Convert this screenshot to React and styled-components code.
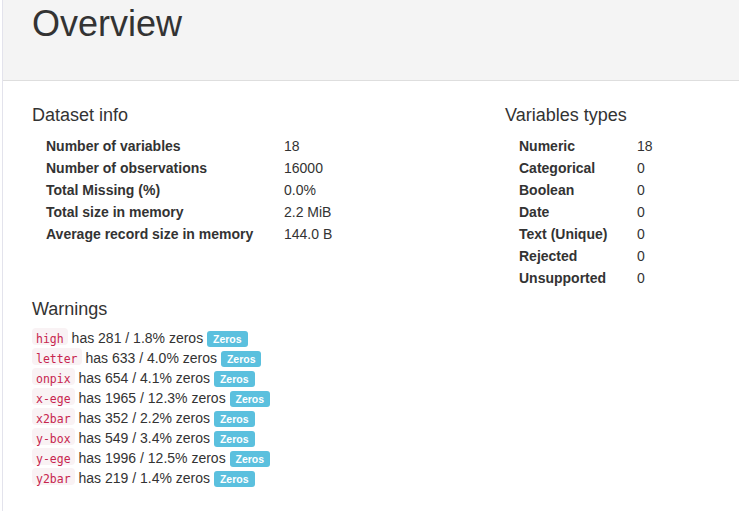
import React from "react";
import styled, { createGlobalStyle } from "styled-components";

const Global = createGlobalStyle`
  html, body { margin: 0; padding: 0; background: #fff; }
  body {
    font-family: "Liberation Sans", Arial, Helvetica, sans-serif;
    color: #333;
  }
`;

const Page = styled.div`
  margin-left: 2px;
  border-left: 1px solid #e3e3ec;
  min-height: 511px;
  box-sizing: border-box;
`;

const Header = styled.header`
  height: 81px;
  box-sizing: border-box;
  background: #f4f4f4;
  border-bottom: 1px solid #dedede;
  padding: 4px 0 0 29px;
`;

const Title = styled.h1`
  margin: 0;
  font-size: 36px;
  font-weight: 400;
  line-height: 1.1;
`;

const Body = styled.main`
  padding: 24px 0 0 29px;
`;

const Columns = styled.div`
  display: grid;
  grid-template-columns: 473px 1fr;
`;

const Heading = styled.h4`
  margin: 0;
  font-size: 18px;
  font-weight: 400;
  line-height: 20px;
`;

const Table = styled.div`
  display: grid;
  grid-template-columns: ${(p) => p.$label}px auto;
  margin: 10px 0 0 14px;
  font-size: 14px;
  line-height: 22px;
`;

const Label = styled.div`
  font-weight: 700;
  white-space: nowrap;
`;

const Value = styled.div`
  white-space: nowrap;
`;

const Warnings = styled.section`
  margin-top: 10px;
`;

const WarnList = styled.div`
  margin-top: 9px;
`;

const WarnRow = styled.div`
  font-size: 14px;
  line-height: 20px;
  height: 20px;
  white-space: nowrap;
`;

const Code = styled.code`
  display: inline-block;
  font-family: "DejaVu Sans Mono", "Liberation Mono", monospace;
  font-size: 11.5px;
  line-height: 12px;
  padding: 5px 4px 0;
  color: #c7254e;
  background: #f9f2f4;
  border-radius: 4px;
`;

const Badge = styled.span`
  display: inline-block;
  font-size: 10.5px;
  font-weight: 700;
  line-height: 10.5px;
  padding: 3px 6px 2px;
  color: #fff;
  background: #5bc0de;
  border-radius: 3px;
`;

const dataset = [
  ["Number of variables", "18"],
  ["Number of observations", "16000"],
  ["Total Missing (%)", "0.0%"],
  ["Total size in memory", "2.2 MiB"],
  ["Average record size in memory", "144.0 B"],
];

const types = [
  ["Numeric", "18"],
  ["Categorical", "0"],
  ["Boolean", "0"],
  ["Date", "0"],
  ["Text (Unique)", "0"],
  ["Rejected", "0"],
  ["Unsupported", "0"],
];

const warnings = [
  ["high", "281", "1.8%"],
  ["letter", "633", "4.0%"],
  ["onpix", "654", "4.1%"],
  ["x-ege", "1965", "12.3%"],
  ["x2bar", "352", "2.2%"],
  ["y-box", "549", "3.4%"],
  ["y-ege", "1996", "12.5%"],
  ["y2bar", "219", "1.4%"],
];

function InfoTable({ rows, labelWidth }) {
  return (
    <Table $label={labelWidth}>
      {rows.map(([l, v]) => (
        <React.Fragment key={l}>
          <Label>{l}</Label>
          <Value>{v}</Value>
        </React.Fragment>
      ))}
    </Table>
  );
}

export default function App() {
  return (
    <>
      <Global />
      <Page>
        <Header>
          <Title>Overview</Title>
        </Header>
        <Body>
          <Columns>
            <div>
              <Heading>Dataset info</Heading>
              <InfoTable rows={dataset} labelWidth={238} />
            </div>
            <div>
              <Heading>Variables types</Heading>
              <InfoTable rows={types} labelWidth={118} />
            </div>
          </Columns>
          <Warnings>
            <Heading>Warnings</Heading>
            <WarnList>
              {warnings.map(([name, n, pct]) => (
                <WarnRow key={name}>
                  <Code>{name}</Code> has {n} / {pct} zeros <Badge>Zeros</Badge>
                </WarnRow>
              ))}
            </WarnList>
          </Warnings>
        </Body>
      </Page>
    </>
  );
}
